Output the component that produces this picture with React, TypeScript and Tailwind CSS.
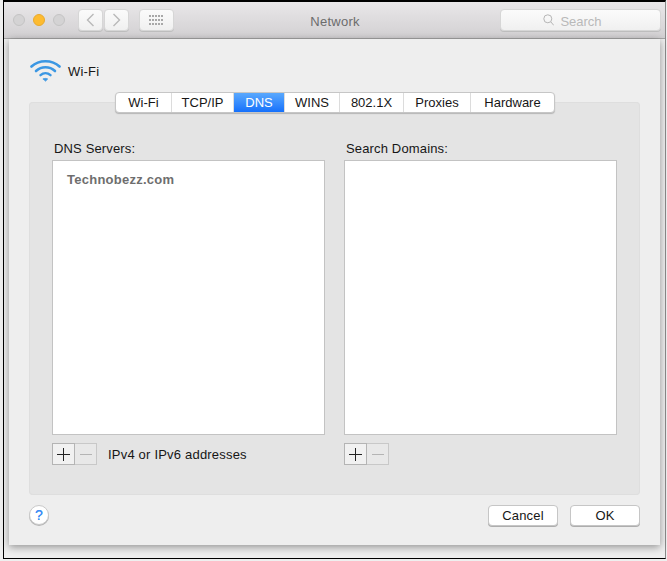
const tabs = [
  { label: 'Wi-Fi', w: 'w-[56px]' },
  { label: 'TCP/IP', w: 'w-[62px]' },
  { label: 'DNS', w: 'w-[51px]' },
  { label: 'WINS', w: 'w-[55px]' },
  { label: '802.1X', w: 'w-[64px]' },
  { label: 'Proxies', w: 'w-[67px]' },
  { label: 'Hardware', w: 'w-[83px]' },
]

function ToolButton({ className, children }: { className: string; children: React.ReactNode }) {
  return (
    <div className={`flex h-[22px] items-center justify-center rounded-[4px] border border-[#d6d6d6] bg-gradient-to-b from-[#fbfbfb] to-[#f0f0f0] shadow-[0_1px_0_#bdbdbd] ${className}`}>
      {children}
    </div>
  )
}

function PlusMinus() {
  return (
    <div className="flex">
      <div className="flex h-[22px] w-[23px] items-center justify-center border border-[#b4b4b4] bg-[#f1f1f1]">
        <svg width="13" height="13" viewBox="0 0 13 13" stroke="#222" strokeWidth="1">
          <path d="M6.5 0v13M0 6.5h13" />
        </svg>
      </div>
      <div className="flex h-[22px] w-[22px] items-center justify-center border border-l-0 border-[#c8c8c8] bg-[#e8e8e8]">
        <svg width="12" height="1" viewBox="0 0 12 1" stroke="#b4b4b4" strokeWidth="1">
          <path d="M0 .5h12" />
        </svg>
      </div>
    </div>
  )
}

function ListColumn({ title, className, children }: { title: string; className: string; children?: React.ReactNode }) {
  return (
    <div className={`flex w-[273px] flex-col ${className}`}>
      <div className="h-[21px] pl-[2px] pt-[2px] text-[13px] leading-[15px] tracking-[0.15px] text-[#161616]">{title}</div>
      <div className="h-[275px] border border-[#c3c3c3] bg-white">{children}</div>
    </div>
  )
}

export default function App() {
  return (
    <div className="h-[561px] w-[667px] overflow-hidden bg-[#efefef] pl-[3px] font-['Liberation_Sans',Arial,sans-serif]">
      <div className="h-[559px] w-[663px] border-x border-t-2 border-b border-black border-r-[#8a8a8a]">
        <div className="flex h-[37px] items-center border-b border-[#a5a5a5] bg-gradient-to-b from-[#e9e7e9] to-[#d2d0d2]">
          <div className="ml-[9px] flex w-[60px] gap-2">
            <span className="h-3 w-3 rounded-full border border-[#c4c4c4] bg-[#d4d3d4]" />
            <span className="h-3 w-3 rounded-full border border-[#e8a92d] bg-[#fdbb30]" />
            <span className="h-3 w-3 rounded-full border border-[#c4c4c4] bg-[#d4d3d4]" />
          </div>
          <div className="ml-[5px] flex gap-px">
            <ToolButton className="w-[25px]">
              <svg width="9" height="14" viewBox="0 0 9 14" fill="none" stroke="#b9b9b9" strokeWidth="1.4">
                <path d="M7.5 1 1.5 7l6 6" />
              </svg>
            </ToolButton>
            <ToolButton className="w-[25px]">
              <svg width="9" height="14" viewBox="0 0 9 14" fill="none" stroke="#b9b9b9" strokeWidth="1.4">
                <path d="m1.5 1 6 6-6 6" />
              </svg>
            </ToolButton>
          </div>
          <ToolButton className="ml-[10px] w-[35px]">
            <svg width="15" height="11" viewBox="0 0 15 11" fill="#a8a8a8">
              {[0, 4, 8].map((y) =>
                [0, 3, 6, 9, 12].map((x) => <rect key={`${x}-${y}`} x={x} y={y} width="2" height="2" />)
              )}
            </svg>
          </ToolButton>
          <div className="ml-[135px] mt-[4px] w-[52px] text-center text-[13px] tracking-[0.25px] text-[#6c6c6c]">Network</div>
          <ToolButton className="ml-[139px] w-[161px] gap-[6px] pr-[16px]">
            <svg width="11" height="12" viewBox="0 0 11 12" fill="none" stroke="#b5b5b5" strokeWidth="1">
              <circle cx="4.8" cy="4.8" r="4" />
              <path d="m7.8 7.8 3 3.6" />
            </svg>
            <span className="pt-[3px] text-[13px] leading-[15px] text-[#b9b9b9]">Search</span>
          </ToolButton>
        </div>
        <div className="pl-[5px]">
          <div className="flex h-[506px] w-[651px] flex-col bg-[#eeeeee] px-5 shadow-[0_2px_8px_rgba(0,0,0,0.4)]">
            <div className="flex h-[54px] items-end gap-[7px] pb-[14px] pl-[1px]">
              <svg width="31" height="24" viewBox="0 0 31 24" fill="none" stroke="#3b97e3" strokeLinecap="round" className="-mb-[3px]">
                <path d="M1.5 8.5C9 1.5 22 1.5 29.5 8.5" strokeWidth="2.6" />
                <path d="M6 13C11.5 8 19.5 8 25 13" strokeWidth="2.6" />
                <path d="M10.5 17.2c3-2.6 7-2.6 10 0" strokeWidth="2.4" />
                <path d="m13.4 21 2.1 2 2.1-2c-1.3-.8-2.9-.8-4.2 0Z" fill="#3b97e3" strokeWidth="1" />
              </svg>
              <span className="text-[13px] leading-[15px] tracking-[0.2px] text-[#161616]">Wi-Fi</span>
            </div>
            <div className="mt-[9px] flex h-[393px] w-[611px] flex-col rounded-[4px] bg-[#e4e4e4] shadow-[inset_0_0_0_1px_#dedede]">
              <div className="-mt-[10px] ml-[86px] flex h-[21px] w-[440px] overflow-hidden rounded-[4px] border border-[#c6c6c6] bg-white shadow-[0_1px_1px_#b5b5b5]">
                {tabs.map((t) => (
                  <div
                    key={t.label}
                    className={`flex items-center justify-center border-r border-[#dcdcdc] text-[13px] last:border-r-0 ${t.w} ${
                      t.label === 'DNS' ? 'bg-gradient-to-b from-[#59a8fd] to-[#1470fb] text-white' : 'text-[#161616]'
                    }`}
                  >
                    {t.label}
                  </div>
                ))}
              </div>
              <div className="mt-[26px] flex pl-[23px]">
                <ListColumn title="DNS Servers:" className="">
                  <div className="pl-[14px] pt-[11px] text-[13px] font-bold leading-[15px] tracking-[0.25px] text-[#6e6e6e]">Technobezz.com</div>
                </ListColumn>
                <ListColumn title="Search Domains:" className="ml-[19px]" />
              </div>
              <div className="mt-2 flex pl-[23px]">
                <div className="flex w-[292px] items-center">
                  <PlusMinus />
                  <span className="ml-[11px] pt-[2px] text-[13px] tracking-[0.2px] text-[#161616]">IPv4 or IPv6 addresses</span>
                </div>
                <PlusMinus />
              </div>
            </div>
            <div className="mt-[10px] flex items-start justify-between">
              <div className="flex h-5 w-5 items-center justify-center rounded-full border border-[#c9c9c9] bg-white text-[14px] leading-none text-[#3f8ef5] [text-shadow:0_0_0.5px_#3f8ef5] shadow-[0_1px_0_#b5b5b5]">?</div>
              <div className="flex gap-3">
                <div className="flex h-[21px] w-[70px] items-center justify-center rounded-[4px] border border-[#c6c6c6] bg-white text-[13px] tracking-[0.2px] text-[#161616] shadow-[0_1px_0_#adadad]">Cancel</div>
                <div className="flex h-[21px] w-[70px] items-center justify-center rounded-[4px] border border-[#c6c6c6] bg-white text-[13px] tracking-[0.2px] text-[#161616] shadow-[0_1px_0_#adadad]">OK</div>
              </div>
            </div>
          </div>
        </div>
      </div>
    </div>
  )
}
